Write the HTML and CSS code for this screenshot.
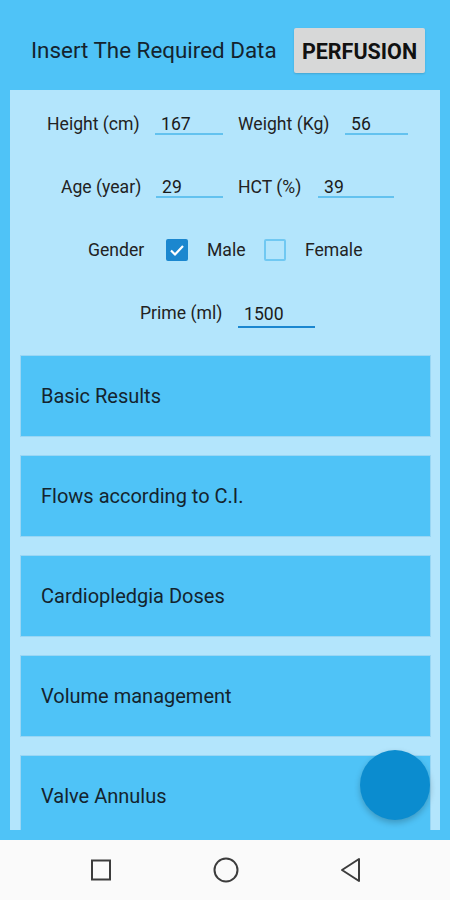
FILE: index.html
```html
<!DOCTYPE html>
<html>
<head>
<meta charset="utf-8">
<link rel="stylesheet" href="styles.css">
</head>
<body>
<div class="screen">
  <main class="app">
    <header class="header">
      <h1 class="title">Insert The Required Data</h1>
      <button class="perf-btn">PERFUSION</button>
    </header>
    <section class="panel">
      <div class="form">
        <div class="row row-1">
          <span class="label l-height">Height (cm)</span>
          <span class="input w68">167</span>
          <span class="label l-weight">Weight (Kg)</span>
          <span class="input w63">56</span>
        </div>
        <div class="row row-2">
          <span class="label l-age">Age (year)</span>
          <span class="input w67">29</span>
          <span class="label l-hct">HCT (%)</span>
          <span class="input w76">39</span>
        </div>
        <div class="row row-3">
          <span class="label l-gender">Gender</span>
          <span class="check checked">
            <svg viewBox="0 0 22 22" width="22" height="22"><path d="M5 11.5l4 4 8-8.5" fill="none" stroke="#fff" stroke-width="2.2"/></svg>
          </span>
          <span class="label l-male">Male</span>
          <span class="check empty"></span>
          <span class="label">Female</span>
        </div>
        <div class="row row-4">
          <span class="label l-prime">Prime (ml)</span>
          <span class="input w77 focused">1500</span>
        </div>
      </div>
      <div class="cards">
        <div class="card">Basic Results</div>
        <div class="card">Flows according to C.I.</div>
        <div class="card">Cardiopledgia Doses</div>
        <div class="card">Volume management</div>
        <div class="card">Valve Annulus</div>
      </div>
    </section>
  </main>
  <nav class="navbar">
    <svg class="nav-icon" viewBox="0 0 24 24" width="24" height="24"><rect x="3" y="2.5" width="18" height="19" fill="none" stroke="#3c3c3c" stroke-width="2"/></svg>
    <svg class="nav-icon" viewBox="0 0 26 26" width="26" height="26"><circle cx="13" cy="13" r="11.5" fill="none" stroke="#3c3c3c" stroke-width="2"/></svg>
    <svg class="nav-icon" viewBox="0 0 24 26" width="24" height="26"><path d="M20 2 L20 24 L3 13 Z" fill="none" stroke="#3c3c3c" stroke-width="2" stroke-linejoin="round"/></svg>
  </nav>
  <div class="fab"></div>
</div>
</body>
</html>
```
FILE: styles.css
```css
* { box-sizing: border-box; }
html, body {
  margin: 0;
  padding: 0;
  width: 450px;
  height: 900px;
  overflow: hidden;
  font-family: Roboto, "Noto Sans", sans-serif;
}
.screen {
  position: relative;
  width: 450px;
  height: 900px;
  display: flex;
  flex-direction: column;
}
.app {
  height: 840px;
  background: #4fc3f7;
  display: flex;
  flex-direction: column;
  padding-bottom: 10px;
}
.header {
  height: 90px;
  display: flex;
  align-items: center;
  padding: 10px 0 0 31px;
}
.title {
  margin: 0;
  font-size: 22.4px;
  font-weight: 400;
  color: #14232e;
  width: 263px;
  white-space: nowrap;
}
.perf-btn {
  width: 131px;
  height: 45px;
  background: #d7d8d8;
  border: none;
  border-radius: 2px;
  font-family: Roboto, sans-serif;
  font-weight: 700;
  font-size: 21.5px;
  color: #111;
  padding: 2px 0 0;
  box-shadow: 0 1px 2px rgba(0,0,0,0.15);
}
.panel {
  flex: 1;
  margin: 0 10px;
  background: #b3e5fc;
  overflow: hidden;
}
.form {
  padding-top: 14px;
  display: flex;
  flex-direction: column;
  gap: 23px;
}
.row {
  height: 40px;
  display: flex;
  align-items: center;
  font-size: 17.6px;
  color: #222;
}
.label { white-space: nowrap; flex: none; }
.input {
  display: block;
  flex: none;
  height: 20px;
  line-height: 18px;
  padding-left: 6px;
  border-bottom: 2px solid #63c2ef;
  color: #1a1a1a;
  margin-top: 2px;
}
.input.focused {
  border-bottom-color: #1b87d0;
  height: 24px;
  line-height: 20px;
  border-bottom-width: 2.5px;
  margin-top: 6px;
}
.w68 { width: 68px; }
.w63 { width: 63px; }
.w67 { width: 67px; }
.w76 { width: 76px; }
.w77 { width: 77px; }

.row-1 { padding-left: 37px; }
.l-height { width: 92px; margin-right: 16px; }
.row-1 .w68 { margin-right: 15px; }
.l-weight { width: 91px; margin-right: 16px; }

.row-2 { padding-left: 51px; }
.l-age { width: 79px; margin-right: 16px; }
.row-2 .w67 { margin-right: 15px; }
.l-hct { width: 64px; margin-right: 16px; }

.row-3 { padding-left: 78px; }
.l-gender { width: 55px; margin-right: 23px; }
.check.checked { margin-right: 19px; }
.l-male { width: 38px; margin-right: 19px; }
.check.empty { margin-right: 19px; }

.row-4 { padding-left: 130px; }
.l-prime { width: 82px; margin-right: 16px; }

.check {
  flex: none;
  width: 22px;
  height: 22px;
  border-radius: 2px;
  border: 2px solid #70c8f2;
  display: flex;
}
.check.checked {
  background: #1b87cf;
  border-color: #1b87cf;
}
.check.checked svg { margin: -2px; }
.cards {
  margin-top: 23px;
  padding: 0 10px 0 11px;
  display: flex;
  flex-direction: column;
  gap: 20px;
}
.card {
  height: 80px;
  flex: none;
  background: #4fc3f7;
  box-shadow: 0 0 0 1px rgba(40,150,210,0.18);
  display: flex;
  align-items: center;
  padding-left: 20px;
  font-size: 20px;
  color: #14232e;
}
.navbar {
  height: 60px;
  background: #fafafa;
  display: flex;
  align-items: center;
  justify-content: center;
  gap: 100px;
  padding-left: 2px;
}
.nav-icon { display: block; }
.fab {
  position: absolute;
  left: 360px;
  top: 750px;
  width: 70px;
  height: 70px;
  border-radius: 50%;
  background: #0b8ccf;
  box-shadow: 0 3px 6px rgba(0,0,0,0.22);
}
```
